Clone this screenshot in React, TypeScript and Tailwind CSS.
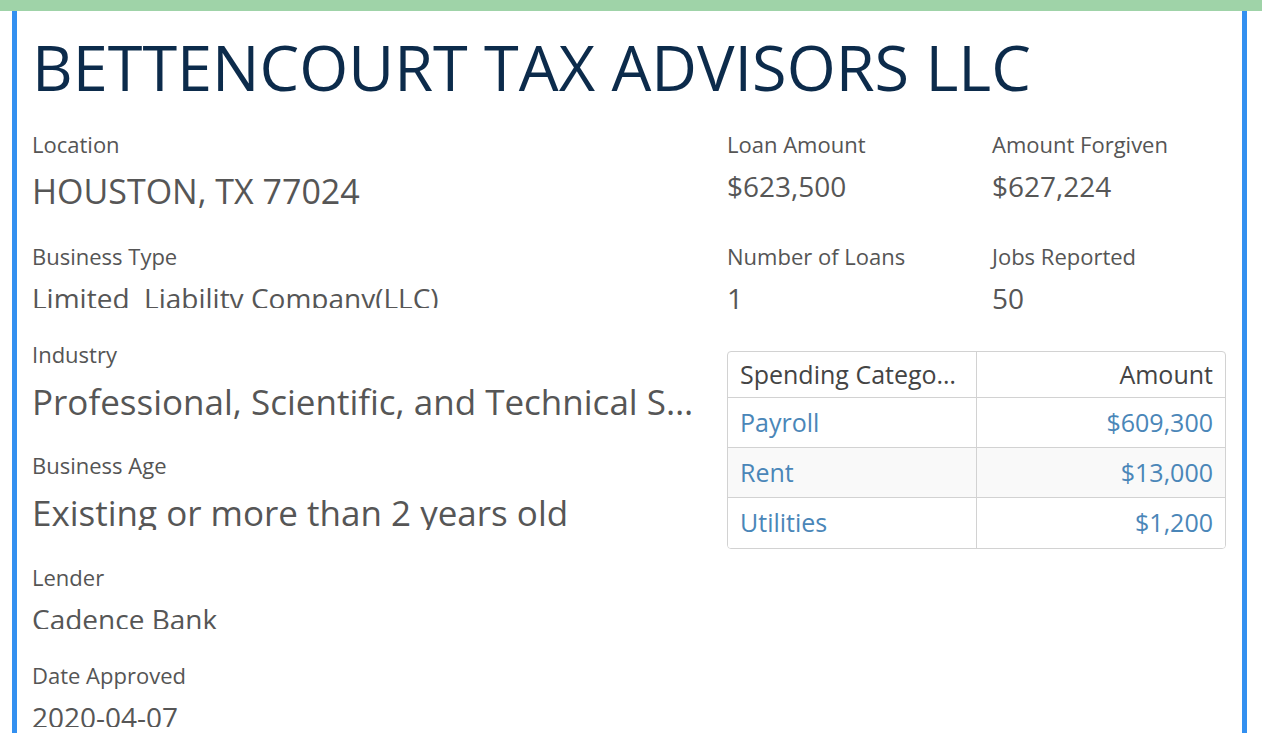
const labelClassName = "text-[22px] leading-[30px] text-[#555]";
const bigValueClassName =
    "mt-[10px] mb-[31.5px] h-[40px] overflow-hidden text-ellipsis whitespace-nowrap leading-[45px] text-[#565656]";
const smallValueClassName =
    "mt-[8px] mb-[31px] h-[29px] overflow-hidden text-ellipsis whitespace-pre text-[28px] leading-[38px] text-[#565656]";

type Field = { label: string; value: string; size?: string };

const leftFields: Field[] = [
    { label: "Location", value: "HOUSTON, TX 77024", size: "text-[34px]" },
    { label: "Business Type", value: "Limited  Liability Company(LLC)" },
    {
        label: "Industry",
        value: "Professional, Scientific, and Technical Services",
        size: "text-[35px]",
    },
    { label: "Business Age", value: "Existing or more than 2 years old", size: "text-[35px]" },
    { label: "Lender", value: "Cadence Bank" },
    { label: "Date Approved", value: "2020-04-07" },
];

const stats = [
    { label: "Loan Amount", value: "$623,500" },
    { label: "Amount Forgiven", value: "$627,224" },
    { label: "Number of Loans", value: "1" },
    { label: "Jobs Reported", value: "50" },
];

const spending = [
    { category: "Payroll", amount: "$609,300" },
    { category: "Rent", amount: "$13,000" },
    { category: "Utilities", amount: "$1,200" },
];

const thClassName =
    "h-[46px] overflow-hidden text-ellipsis whitespace-nowrap text-[25px] font-normal text-[#444]";
const tdClassName =
    "h-[50px] px-3 overflow-hidden text-ellipsis whitespace-nowrap text-[25px] text-[#4a86b8]";

export default function App() {
    return (
        <div className="min-h-screen bg-white font-['Open_Sans',sans-serif]">
            <div className="h-[11px] bg-[#9fd3a8]" />
            <div className="ml-[12px] mr-[15px] min-h-[722px] border-x-[5px] border-[#3390f0] pl-[15px] pr-4 pt-[20px]">
                <h1 className="whitespace-nowrap text-[63px] font-normal leading-[72px] text-[#0c2b4b]">
                    BETTENCOURT TAX ADVISORS LLC
                </h1>

                <div className="mt-[26px] grid grid-cols-[662px_1fr] gap-x-[33px]">
                    <div>
                        {leftFields.map((field) => (
                            <div key={field.label}>
                                <div className={labelClassName}>{field.label}</div>
                                <div
                                    className={
                                        field.size
                                            ? `${bigValueClassName} ${field.size}`
                                            : smallValueClassName
                                    }
                                >
                                    {field.value}
                                </div>
                            </div>
                        ))}
                    </div>

                    <div>
                        <div className="grid grid-cols-[265px_1fr] gap-y-[35.5px]">
                            {stats.map((stat) => (
                                <div key={stat.label}>
                                    <div className={labelClassName}>{stat.label}</div>
                                    <div className="mt-[8px] h-[38px] whitespace-nowrap text-[28px] leading-[38px] text-[#565656]">
                                        {stat.value}
                                    </div>
                                </div>
                            ))}
                        </div>

                        <div className="mt-[34px] overflow-hidden rounded-[4px] border border-[#d2d2d2]">
                            <table className="w-full table-fixed border-collapse">
                                <thead>
                                    <tr className="border-b border-[#d2d2d2]">
                                        <th className={`${thClassName} border-r border-[#d2d2d2] pl-3 pr-[18px] text-left`}>
                                            Spending Category
                                        </th>
                                        <th className={`${thClassName} px-3 text-right`}>Amount</th>
                                    </tr>
                                </thead>
                                <tbody>
                                    {spending.map((row, index) => (
                                        <tr
                                            key={row.category}
                                            className={`border-b border-[#d2d2d2] last:border-b-0 ${
                                                index % 2 === 1 ? "bg-[#f9f9f9]" : "bg-white"
                                            }`}
                                        >
                                            <td className={`${tdClassName} border-r border-[#d2d2d2] text-left`}>
                                                {row.category}
                                            </td>
                                            <td className={`${tdClassName} text-right`}>{row.amount}</td>
                                        </tr>
                                    ))}
                                </tbody>
                            </table>
                        </div>
                    </div>
                </div>
            </div>
        </div>
    );
}
